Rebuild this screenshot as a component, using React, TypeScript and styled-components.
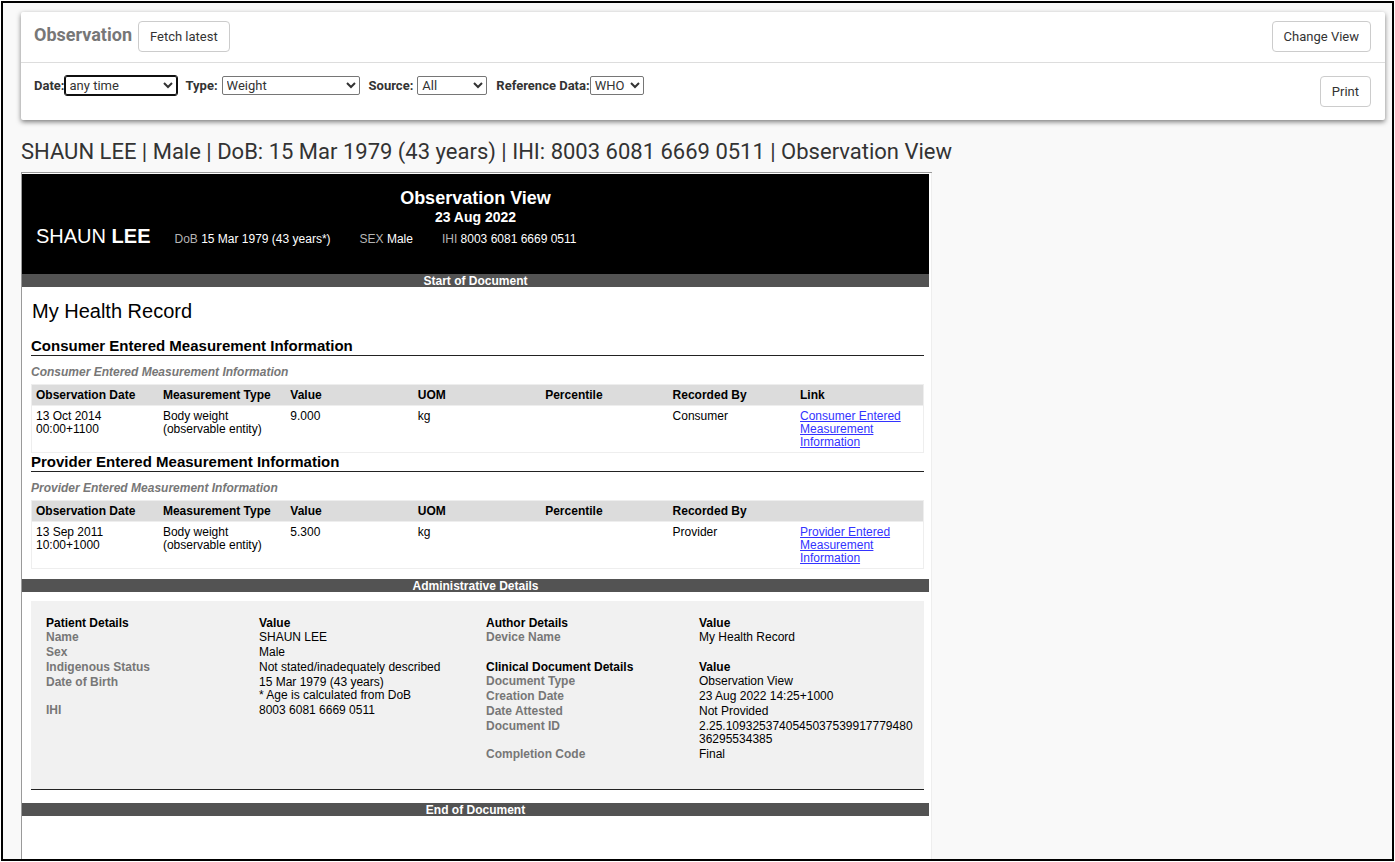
import React from "react";
import styled, { createGlobalStyle } from "styled-components";

const GlobalStyle = createGlobalStyle`
  *, *::before, *::after { box-sizing: border-box; }
  body { margin: 0; background: #fff; color: #333; font-family: Roboto, sans-serif; font-size: 13px; }
`;

const Frame = styled.div`
  min-height: 100vh;
  padding: 1px;
  display: flex;
`;

const Page = styled.div`
  flex: 1;
  min-width: 0;
  display: flex;
  flex-direction: column;
  border: 2px solid #000;
  background: #f9f9f9;
  padding: 9px 7px 0 18px;
`;

const Card = styled.header`
  background: #fff;
  border-radius: 2px;
  box-shadow: 0 2px 5px rgba(0, 0, 0, 0.5);
`;

const CardRow = styled.div<{ $divided?: boolean }>`
  display: flex;
  align-items: flex-start;
  justify-content: space-between;
  padding: ${(p) => (p.$divided ? "9px 14px 10px 13px" : "13px 14px 13px 13px")};
  border-bottom: ${(p) => (p.$divided ? "1px solid #ddd" : "0")};
`;

const TitleGroup = styled.div`
  display: flex;
  align-items: flex-start;
  gap: 6px;
`;

const Title = styled.h1`
  margin: 0;
  font-size: 18px;
  line-height: 28px;
  font-weight: 700;
  color: #777;
`;

const Button = styled.button`
  height: 31px;
  padding: 0 11px;
  border: 1px solid #ccc;
  border-radius: 4px;
  background: #fff;
  color: #333;
  font: 13px/20px Roboto, sans-serif;
`;

const Filters = styled.form`
  display: flex;
  gap: 9px;
`;

const Field = styled.div<{ $gap: number }>`
  display: flex;
  align-items: center;
  height: 19px;
  gap: ${(p) => p.$gap}px;
`;

const Label = styled.label`
  font-weight: 700;
  color: #333;
`;

const Select = styled.select<{ $width: number; $active?: boolean }>`
  width: ${(p) => p.$width}px;
  height: 19px;
  border: 1px solid ${(p) => (p.$active ? "#101010" : "#767676")};
  border-radius: 2px;
  outline: ${(p) => (p.$active ? "1px solid #101010" : "none")};
  background: #fff;
  color: #333;
  font: 13px Roboto, sans-serif;
`;

const PatientLine = styled.h2`
  margin: 18px 0 6px;
  font-size: 22px;
  line-height: 28px;
  font-weight: 400;
  color: #333;
`;

const Document = styled.article`
  flex: 1;
  width: 100%;
  max-width: 911px;
  padding: 1px 3px 24px 0;
  border: solid #9a9a9a;
  border-width: 1px 0 0 1px;
  box-shadow: inset -1px 0 #eee;
  background: #fff;
  color: #000;
  font: 12px/13px "Liberation Sans", Arial, sans-serif;
`;

const Banner = styled.div`
  height: 100px;
  padding: 13px 14px 0;
  background: #000;
  color: #fff;
`;

const BannerTitle = styled.h3`
  margin: 0;
  font-size: 18px;
  line-height: 22px;
  text-align: center;
`;

const BannerDate = styled.p`
  margin: 0;
  font-size: 14px;
  line-height: 16px;
  font-weight: 700;
  text-align: center;
`;

const Identity = styled.div`
  display: flex;
  align-items: baseline;
`;

const PatientName = styled.span`
  margin-right: 24px;
  font-size: 20px;
  line-height: 22px;
`;

const Fact = styled.span`
  margin-right: 29px;
  span { color: #b5b5b5; }
`;

const Bar = styled.div`
  height: 13px;
  padding-top: 1px;
  background: #535353;
  color: #fff;
  font-weight: 700;
  text-align: center;
`;

const Body = styled.div`
  padding: 12px 5px 10px 9px;
`;

const RecordTitle = styled.h3`
  margin: 0 1px 14px;
  font-size: 20px;
  line-height: 24px;
  font-weight: 400;
`;

const SectionTitle = styled.h4`
  margin: 0;
  border-bottom: 1px solid #222;
  font-size: 15px;
  line-height: 18px;
`;

const Caption = styled.p`
  margin: 10px 0 5px;
  color: #777;
  font-weight: 700;
  font-style: italic;
`;

const Table = styled.table`
  width: 100%;
  table-layout: fixed;
  border-collapse: collapse;
  border: 1px solid #eee;
  th, td { text-align: left; vertical-align: top; padding: 4px 4px 3px; }
  th { background: #dcdcdc; }
  td { border-top: 1px solid #eee; }
  a { color: #33f; }
`;

const Details = styled.div`
  display: grid;
  grid-template-columns: 440fr 438fr;
  align-items: start;
  min-height: 189px;
  margin: 9px 5px 13px 9px;
  padding: 15px 0 0 15px;
  border-bottom: 1px solid #222;
  background: #f1f1f1;
`;

const DetailTable = styled.table`
  width: 100%;
  table-layout: fixed;
  border-collapse: collapse;
  margin-bottom: 15px;
  th, td { padding: 1px 0; text-align: left; vertical-align: top; }
  thead th { padding: 1px 0 0; }
  tbody th { color: #777; }
  td { padding-right: 8px; overflow-wrap: anywhere; }
`;

const KeyCol = styled.col`
  width: 213px;
`;

type Observation = { date: string; value: string; by: string; link: string; linkHead: string };

function Measurements({ date, value, by, link, linkHead }: Observation) {
  const heads = ["Observation Date", "Measurement Type", "Value", "UOM", "Percentile", "Recorded By"];
  return (
    <section>
      <SectionTitle>{link}</SectionTitle>
      <Caption>{link}</Caption>
      <Table>
        <thead>
          <tr>
            {heads.map((h) => <th key={h} scope="col">{h}</th>)}
            <th scope="col">{linkHead}</th>
          </tr>
        </thead>
        <tbody>
          <tr>
            <td>{date}</td>
            <td>Body weight (observable entity)</td>
            <td>{value}</td>
            <td>kg</td>
            <td />
            <td>{by}</td>
            <td><a href="#document">{link}</a></td>
          </tr>
        </tbody>
      </Table>
    </section>
  );
}

function DetailList({ title, rows }: { title: string; rows: [string, React.ReactNode][] }) {
  return (
    <DetailTable>
      <colgroup><KeyCol /><col /></colgroup>
      <thead><tr><th scope="col">{title}</th><th scope="col">Value</th></tr></thead>
      <tbody>
        {rows.map(([k, v]) => <tr key={k}><th scope="row">{k}</th><td>{v}</td></tr>)}
      </tbody>
    </DetailTable>
  );
}

function Filter(p: { id: string; label: string; value: string; width: number; gap?: number; active?: boolean }) {
  return (
    <Field $gap={p.gap ?? 4}>
      <Label htmlFor={p.id}>{p.label}</Label>
      <Select id={p.id} $width={p.width} $active={p.active}><option>{p.value}</option></Select>
    </Field>
  );
}

export default function App() {
  return (
    <>
      <GlobalStyle />
      <Frame>
        <Page>
          <Card>
            <CardRow $divided>
              <TitleGroup>
                <Title>Observation</Title>
                <Button type="button">Fetch latest</Button>
              </TitleGroup>
              <Button type="button">Change View</Button>
            </CardRow>
            <CardRow>
              <Filters>
                <Filter id="date" label="Date:" value="any time" width={112} gap={0} active />
                <Filter id="type" label="Type:" value="Weight" width={138} />
                <Filter id="source" label="Source:" value="All" width={70} />
                <Filter id="reference" label="Reference Data:" value="WHO" width={54} gap={0} />
              </Filters>
              <Button type="button">Print</Button>
            </CardRow>
          </Card>
          <PatientLine>
            SHAUN LEE | Male | DoB: 15 Mar 1979 (43 years) | IHI: 8003 6081 6669 0511 | Observation View
          </PatientLine>
          <Document id="document">
            <Banner>
              <BannerTitle>Observation View</BannerTitle>
              <BannerDate>23 Aug 2022</BannerDate>
              <Identity>
                <PatientName>SHAUN <b>LEE</b></PatientName>
                <Fact><span>DoB</span> 15 Mar 1979 (43 years*)</Fact>
                <Fact><span>SEX</span> Male</Fact>
                <Fact><span>IHI</span> 8003 6081 6669 0511</Fact>
              </Identity>
            </Banner>
            <Bar>Start of Document</Bar>
            <Body>
              <RecordTitle>My Health Record</RecordTitle>
              <Measurements
                date="13 Oct 2014 00:00+1100"
                value="9.000"
                by="Consumer"
                link="Consumer Entered Measurement Information"
                linkHead="Link"
              />
              <Measurements
                date="13 Sep 2011 10:00+1000"
                value="5.300"
                by="Provider"
                link="Provider Entered Measurement Information"
                linkHead=""
              />
            </Body>
            <Bar>Administrative Details</Bar>
            <Details>
              <DetailList
                title="Patient Details"
                rows={[
                  ["Name", "SHAUN LEE"],
                  ["Sex", "Male"],
                  ["Indigenous Status", "Not stated/inadequately described"],
                  ["Date of Birth", <>15 Mar 1979 (43 years)<br />* Age is calculated from DoB</>],
                  ["IHI", "8003 6081 6669 0511"],
                ]}
              />
              <div>
                <DetailList title="Author Details" rows={[["Device Name", "My Health Record"]]} />
                <DetailList
                  title="Clinical Document Details"
                  rows={[
                    ["Document Type", "Observation View"],
                    ["Creation Date", "23 Aug 2022 14:25+1000"],
                    ["Date Attested", "Not Provided"],
                    ["Document ID", "2.25.109325374054503753991777948036295534385"],
                    ["Completion Code", "Final"],
                  ]}
                />
              </div>
            </Details>
            <Bar>End of Document</Bar>
          </Document>
        </Page>
      </Frame>
    </>
  );
}
